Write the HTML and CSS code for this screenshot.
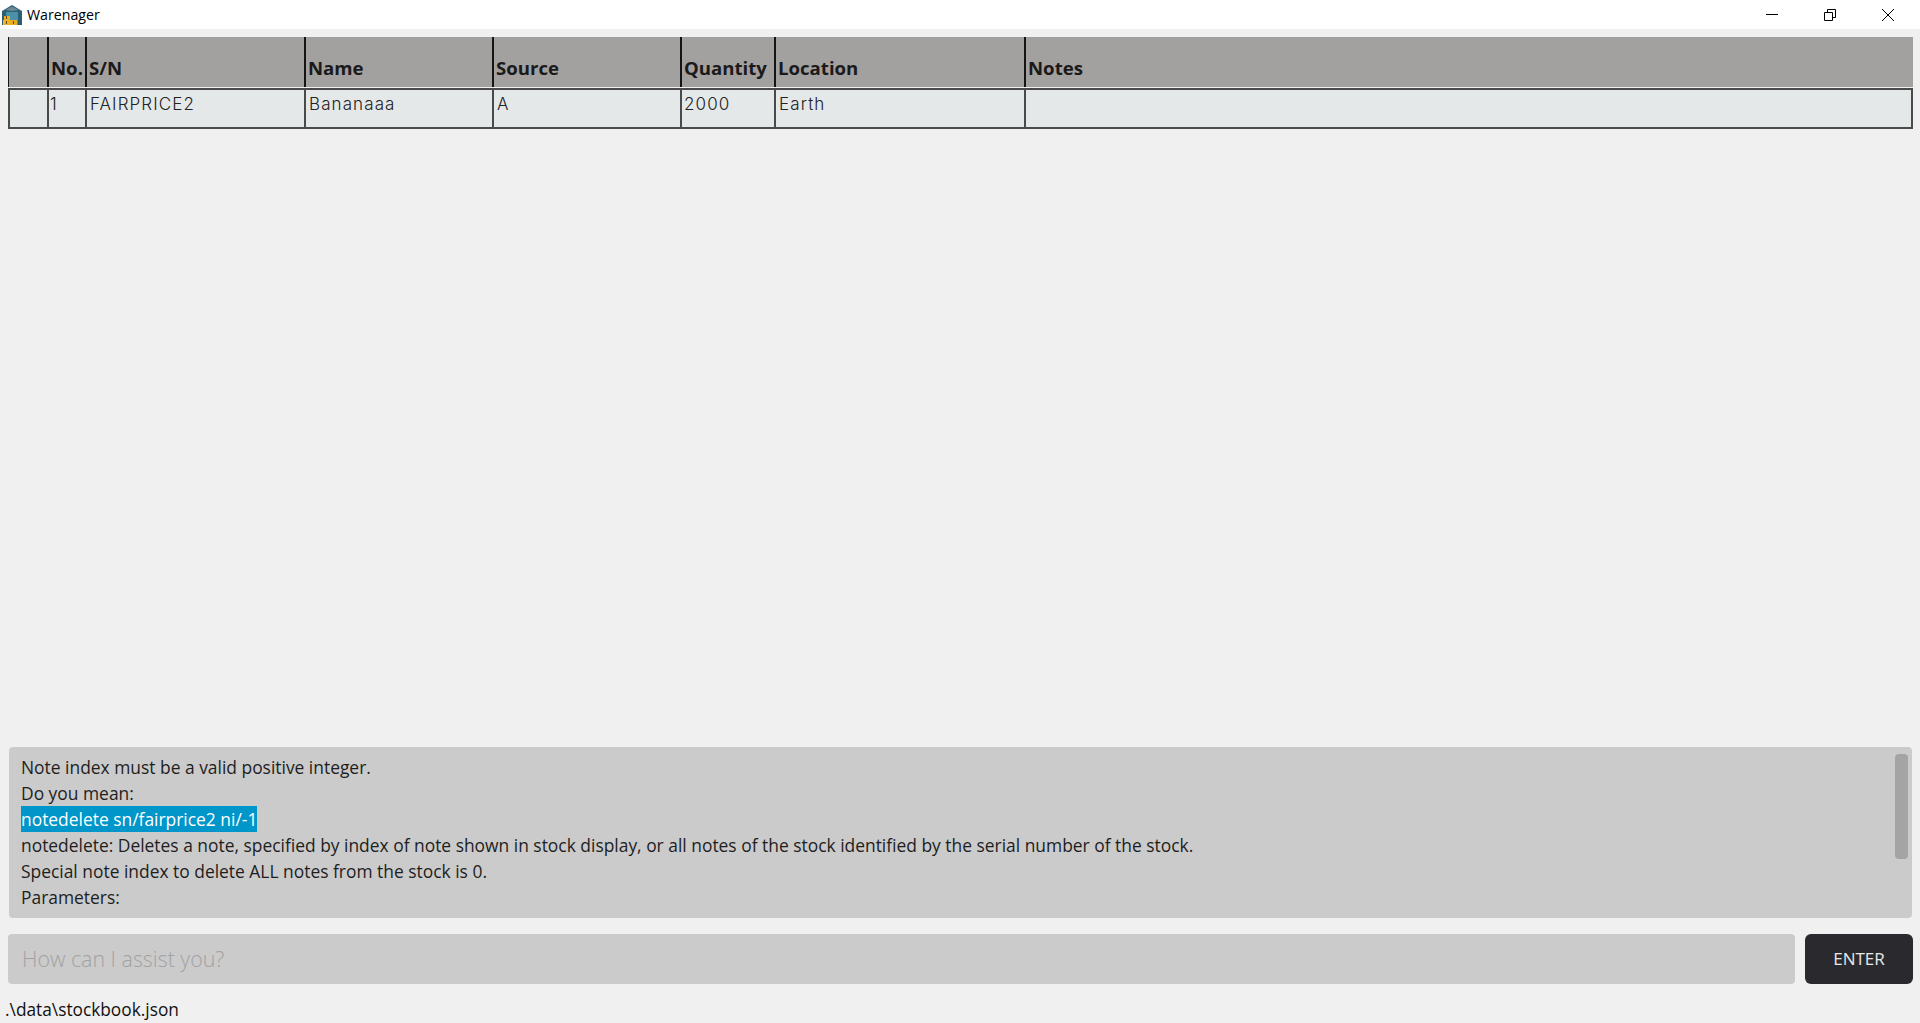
FILE: index.html
```html
<!DOCTYPE html>
<html lang="en">
<head>
<meta charset="utf-8">
<title>Warenager</title>
<link rel="stylesheet" href="styles.css">
</head>
<body>
<div class="app">
  <header class="titlebar">
    <svg class="app-icon" width="20" height="20" viewBox="0 0 20 20">
      <path d="M0 6 L10 0 L20 6 V20 H0 Z" fill="#2b5f73"/>
      <path d="M3 5 L10 1.5 L17 5 L10 6 Z" fill="#6d8894"/>
      <rect x="4" y="7" width="12" height="13" fill="#4a90a8"/>
      <rect x="2" y="11" width="6" height="4" fill="#e8ad25"/>
      <rect x="1" y="15" width="7" height="5" fill="#f0b429"/>
      <rect x="8" y="15" width="7" height="5" fill="#e8ad25"/>
      <path d="M4.5 11v3M4.5 16v3M11.5 16v3" stroke="#6b4a10" stroke-width="1"/>
    </svg>
    <span class="app-title">Warenager</span>
    <div class="win-controls">
      <svg class="win-btn" width="12" height="12" viewBox="0 0 12 12"><path d="M0 5.5H12" stroke="#000" fill="none"/></svg>
      <svg class="win-btn" width="12" height="12" viewBox="0 0 12 12"><path d="M.5 3.5H8.5V11.5H.5ZM3.5 3.5V.5H11.5V8.5H8.5" stroke="#000" fill="none"/></svg>
      <svg class="win-btn" width="12" height="12" viewBox="0 0 12 12"><path d="M0 0L12 12M12 0L0 12" stroke="#000" fill="none"/></svg>
    </div>
  </header>

  <main class="content">
    <section class="stock-table">
      <div class="table-row table-head">
        <div class="cell"></div>
        <div class="cell">No.</div>
        <div class="cell">S/N</div>
        <div class="cell">Name</div>
        <div class="cell">Source</div>
        <div class="cell">Quantity</div>
        <div class="cell">Location</div>
        <div class="cell">Notes</div>
      </div>
      <div class="table-row table-body">
        <div class="cell"></div>
        <div class="cell">1</div>
        <div class="cell">FAIRPRICE2</div>
        <div class="cell">Bananaaa</div>
        <div class="cell">A</div>
        <div class="cell">2000</div>
        <div class="cell">Earth</div>
        <div class="cell"></div>
      </div>
    </section>

    <section class="result-box">
      <div class="result-text">
        <div>Note index must be a valid positive integer.</div>
        <div>Do you mean:</div>
        <div><span class="selected">notedelete sn/fairprice2 ni/-1</span></div>
        <div>notedelete: Deletes a note, specified by index of note shown in stock display, or all notes of the stock identified by the serial number of the stock.</div>
        <div>Special note index to delete ALL notes from the stock is 0.</div>
        <div>Parameters:</div>
      </div>
      <div class="scroll-track"><div class="scroll-thumb"></div></div>
    </section>

    <section class="command-row">
      <div class="command-input">How can I assist you?</div>
      <div class="enter-btn">ENTER</div>
    </section>

    <footer class="status">.\data\stockbook.json</footer>
  </main>
</div>
</body>
</html>
```
FILE: styles.css
```css
* { box-sizing: border-box; }
html, body { margin: 0; height: 100%; overflow: hidden; }
body { background: #f0f0f0; font-family: "Open Sans", "Noto Sans", sans-serif; color: #1a1a1a; }
.app { height: 1023px; display: flex; flex-direction: column; }

.titlebar { height: 29px; flex: none; background: #fff; display: flex; align-items: center; padding-left: 2px; }
.app-icon { flex: none; margin-right: 5px; }
.app-title { font-family: "Open Sans", sans-serif; font-size: 14.2px; color: #000; }
.win-controls { margin-left: auto; display: flex; gap: 46px; padding-right: 26px; align-items: center; }
.win-btn { display: block; }

.content { flex: 1; display: flex; flex-direction: column; padding: 8px 7px 0 8px; min-height: 0; }

.stock-table { flex: 1; min-height: 0; }
.table-row { display: grid; grid-template-columns: 39px 38px 219px 188px 188px 94px 250px 1fr; }
.table-head { height: 50px; background: #a3a0a0; font-weight: 700; font-size: 18.6px; color: #1a1a1a; }
.table-head .cell { border-left: 2px solid #141414; padding: 18px 0 0 2px; line-height: 25px; white-space: nowrap; }
.table-head .cell:first-child { border-left-width: 1px; }
.table-body { height: 41px; margin-top: 1px; background: #e5e8e9; border: 2px solid #4a4a4a; font-family: Inter, "Liberation Sans", sans-serif; font-size: 17px; font-weight: 300; letter-spacing: 1.1px; color: #222; }
.table-body { grid-template-columns: 37px 38px 219px 188px 188px 94px 250px 1fr; }
.table-body .cell { border-left: 2px solid #4a4a4a; padding: 3px 0 0 3px; line-height: 22px; white-space: nowrap; }
.table-body .cell:nth-child(2) { padding-left: 1px; }
.table-body .cell:nth-child(6) { padding-left: 2px; }
.table-body .cell:first-child { border-left: 0; }

.result-box { height: 171px; flex: none; margin-left: 1px; margin-right: 1px; background: #cbcbcb; border-radius: 4px; padding: 6.6px 4px 0 12px; display: flex; overflow: hidden; }
.result-text { flex: 1; font-size: 17.42px; line-height: 26.15px; color: #1e1e1e; white-space: nowrap; }
.selected { background: #0096c9; color: #fff; display: inline-block; line-height: 26px; }
.scroll-track { width: 13px; flex: none; }
.scroll-thumb { height: 105px; background: #a4a4a4; border-radius: 4px; }

.command-row { flex: none; height: 50px; margin-top: 16px; display: flex; gap: 10px; }
.command-input { flex: 1; background: #cbcbcb; border-radius: 4px; padding-left: 14px; font-size: 21.4px; font-weight: 300; line-height: 50px; color: #a2a2a2; }
.enter-btn { width: 108px; flex: none; background: #2a2a2e; border-radius: 6px; color: #e8e8e8; font-size: 17px; line-height: 50px; text-align: center; }

.status { flex: none; height: 39px; padding: 14px 0 0 0; margin-left: -3px; font-size: 17.3px; line-height: 24px; color: #111; }
```
